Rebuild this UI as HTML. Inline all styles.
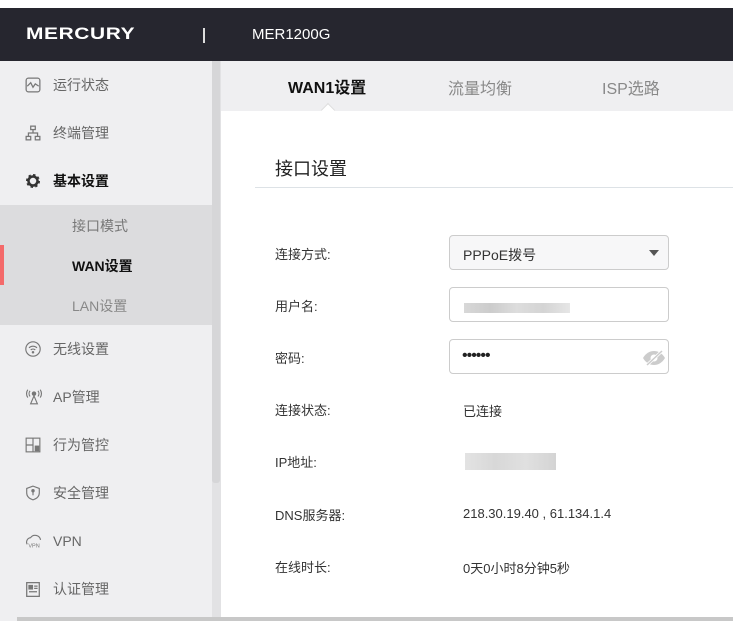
<!DOCTYPE html>
<html><head><meta charset="utf-8"><style>
*{margin:0;padding:0;box-sizing:border-box}
body{width:733px;height:621px;overflow:hidden;background:#fff;font-family:"Liberation Sans","Noto Sans CJK SC",sans-serif;position:relative;color:#333}
.abs{position:absolute}
.hdr{left:0;top:8px;width:733px;height:53px;background:#26262f;color:#fff}
.side{left:0;top:61px;width:212px;height:560px;background:#efeff1}
.item{position:absolute;left:0;width:212px;height:48px;line-height:48px;font-size:14px;color:#666}
.item .t{position:absolute;left:53px}
.item svg{position:absolute;left:25px;top:16px}
.sub{position:absolute;left:0;width:212px;height:40px;line-height:40px;font-size:14px;color:#777}
.sub span{position:absolute;left:72px}
.lbl{position:absolute;left:275px;font-size:13px;color:#333}
.val{position:absolute;left:463px;font-size:13px;color:#333}
.inp{position:absolute;left:449px;width:220px;height:35px;border:1px solid #ccc;border-radius:4px;background:#fff}
</style></head><body>
<div class="abs hdr">
 <div class="abs" style="left:26px;top:16px;font-size:17px;font-weight:bold;letter-spacing:0.5px;transform:scaleX(1.23);transform-origin:left">MERCURY</div>
 <div class="abs" style="left:203px;top:20px;width:2px;height:15px;background:#ddd"></div>
 <div class="abs" style="left:252px;top:18px;font-size:15px">MER1200G</div>
</div>
<div class="abs side">
 <div class="item" style="top:0"><svg width="16" height="16" viewBox="0 0 14 14" fill="none" stroke="#777" stroke-width="1.1"><rect x="1" y="1" width="12" height="12" rx="2"/><path d="M2 8l3-3 2 4 2-3 3 2"/></svg><span class="t">运行状态</span></div>
 <div class="item" style="top:48px"><svg width="16" height="16" viewBox="0 0 14 14" fill="none" stroke="#777" stroke-width="1.1"><rect x="5" y="1" width="4" height="3"/><rect x="1" y="10" width="4" height="3"/><rect x="9" y="10" width="4" height="3"/><path d="M7 4v3M3 10V7h8v3"/></svg><span class="t">终端管理</span></div>
 <div class="item" style="top:96px;color:#111;font-weight:bold"><svg width="16" height="16" viewBox="0 0 16 16"><circle cx="8" cy="8" r="5.5" fill="none" stroke="#333" stroke-width="3" stroke-dasharray="2.2 2.1"/><circle cx="8" cy="8" r="4.5" fill="none" stroke="#333" stroke-width="2.5"/></svg><span class="t">基本设置</span></div>
 <div class="abs" style="left:0;top:144px;width:212px;height:120px;background:#dcdcde"></div>
 <div class="sub" style="top:145px"><span>接口模式</span></div>
 <div class="sub" style="top:185px;color:#111;font-weight:bold"><span>WAN设置</span></div>
 <div class="abs" style="left:0;top:184px;width:4px;height:40px;background:#f46a6a"></div>
 <div class="sub" style="top:225px;color:#888"><span>LAN设置</span></div>
 <div class="item" style="top:264px"><svg width="16" height="16" viewBox="0 0 14 14" fill="none" stroke="#777" stroke-width="1"><circle cx="7" cy="7" r="6.3"/><path d="M3.5 6a5 5 0 0 1 7 0M5 7.8a3 3 0 0 1 4 0"/><circle cx="7" cy="9.8" r=".6" fill="#777"/></svg><span class="t">无线设置</span></div>
 <div class="item" style="top:312px"><svg width="18" height="16" viewBox="0 0 16 14" fill="none" stroke="#777" stroke-width="1"><circle cx="8" cy="4" r="1.5" fill="#777"/><path d="M4.5 1.5a4 4 0 0 0 0 5M11.5 1.5a4 4 0 0 1 0 5M2.5 0.5a6 6 0 0 0 0 7M13.5 0.5a6 6 0 0 1 0 7M8 6l-3 7h6z"/></svg><span class="t">AP管理</span></div>
 <div class="item" style="top:360px"><svg width="16" height="16" viewBox="0 0 14 14" fill="none" stroke="#777" stroke-width="1"><rect x="1" y="1" width="12" height="12"/><path d="M1 7h6M7 1v12"/><rect x="9" y="8" width="3" height="4" fill="#777"/></svg><span class="t">行为管控</span></div>
 <div class="item" style="top:408px"><svg width="16" height="16" viewBox="0 0 14 14" fill="none" stroke="#777" stroke-width="1"><path d="M7 1l5.5 2v4c0 3-2.5 5-5.5 6-3-1-5.5-3-5.5-6V3z"/><path d="M7 5v4"/><circle cx="7" cy="5" r="1" fill="#777"/></svg><span class="t">安全管理</span></div>
 <div class="item" style="top:456px"><svg width="20" height="16" viewBox="0 0 18 14" fill="none" stroke="#777" stroke-width="1"><path d="M2 10a4 4 0 0 1 3-6 5 5 0 0 1 9 2"/><text x="3" y="13" font-size="5" fill="#777" stroke="none" font-family="Liberation Sans">VPN</text></svg><span class="t">VPN</span></div>
 <div class="item" style="top:504px"><svg width="16" height="17" viewBox="0 0 14 14" fill="none" stroke="#777" stroke-width="1.1"><rect x="1.5" y="1" width="11" height="12"/><rect x="3.5" y="3.5" width="3" height="3" fill="#777"/><path d="M8 4h3M8 6h3M3.5 9h7"/></svg><span class="t">认证管理</span></div>
</div>
<div class="abs" style="left:212px;top:61px;width:9px;height:560px;background:#e2e2e4"></div>
<div class="abs" style="left:212px;top:61px;width:8px;height:422px;background:#d6d6d8;border-radius:0 0 3px 3px"></div>
<div class="abs" style="left:221px;top:61px;width:512px;height:50px;background:#efeff1"></div>
<div class="abs" style="left:288px;top:74px;font-size:16px;font-weight:bold;color:#111">WAN1设置</div>
<div class="abs" style="left:448px;top:75px;font-size:16px;color:#888">流量均衡</div>
<div class="abs" style="left:602px;top:75px;font-size:16px;color:#888">ISP选路</div>
<div class="abs" style="left:323px;top:105px;width:10px;height:10px;background:#fff;border-left:1px solid #ddd;border-top:1px solid #ddd;transform:rotate(45deg)"></div>
<div class="abs" style="left:275px;top:155px;font-size:18px;color:#222">接口设置</div>
<div class="abs" style="left:255px;top:187px;width:478px;height:1px;background:#dde2e6"></div>
<div class="lbl" style="top:244px">连接方式:</div>
<div class="lbl" style="top:296px">用户名:</div>
<div class="lbl" style="top:348px">密码:</div>
<div class="lbl" style="top:400px">连接状态:</div>
<div class="lbl" style="top:452px">IP地址:</div>
<div class="lbl" style="top:505px">DNS服务器:</div>
<div class="lbl" style="top:557px">在线时长:</div>
<div class="inp" style="top:235px;background:#f7f7f8"><span class="abs" style="left:13px;top:9px;font-size:14px">PPPoE拨号</span><span class="abs" style="left:199px;top:14px;width:0;height:0;border-left:5px solid transparent;border-right:5px solid transparent;border-top:6px solid #555"></span></div>
<div class="inp" style="top:287px"><div class="abs" style="left:14px;top:15px;width:106px;height:10px;background:linear-gradient(90deg,#d8d8d8,#ccc,#ddd,#d4d4d4,#e6e6e6)"></div></div>
<div class="inp" style="top:339px"><span class="abs" style="left:12px;top:7px;font-size:16px;letter-spacing:-1px;color:#222">••••••</span><svg class="abs" style="left:192px;top:10px" width="24" height="16" viewBox="0 0 24 16"><path d="M1 8c3-5 7-7 11-7s8 2 11 7c-3 5-7 7-11 7S4 13 1 8z" fill="#ccc"/><circle cx="12" cy="8" r="3.5" fill="#fff"/><path d="M5 15L20 1" stroke="#fff" stroke-width="3"/><path d="M5 15L20 1" stroke="#ccc" stroke-width="1.5"/></svg></div>
<div class="val" style="top:401px">已连接</div>
<div class="abs" style="left:465px;top:453px;width:91px;height:17px;background:linear-gradient(90deg,#e3e3e3,#d8d8d8,#e0e0e0,#d4d4d4)"></div>
<div class="val" style="top:506px">218.30.19.40 , 61.134.1.4</div>
<div class="val" style="top:558px">0天0小时8分钟5秒</div>
<div class="abs" style="left:17px;top:617px;width:716px;height:4px;background:#c8c8c8"></div>
</body></html>
